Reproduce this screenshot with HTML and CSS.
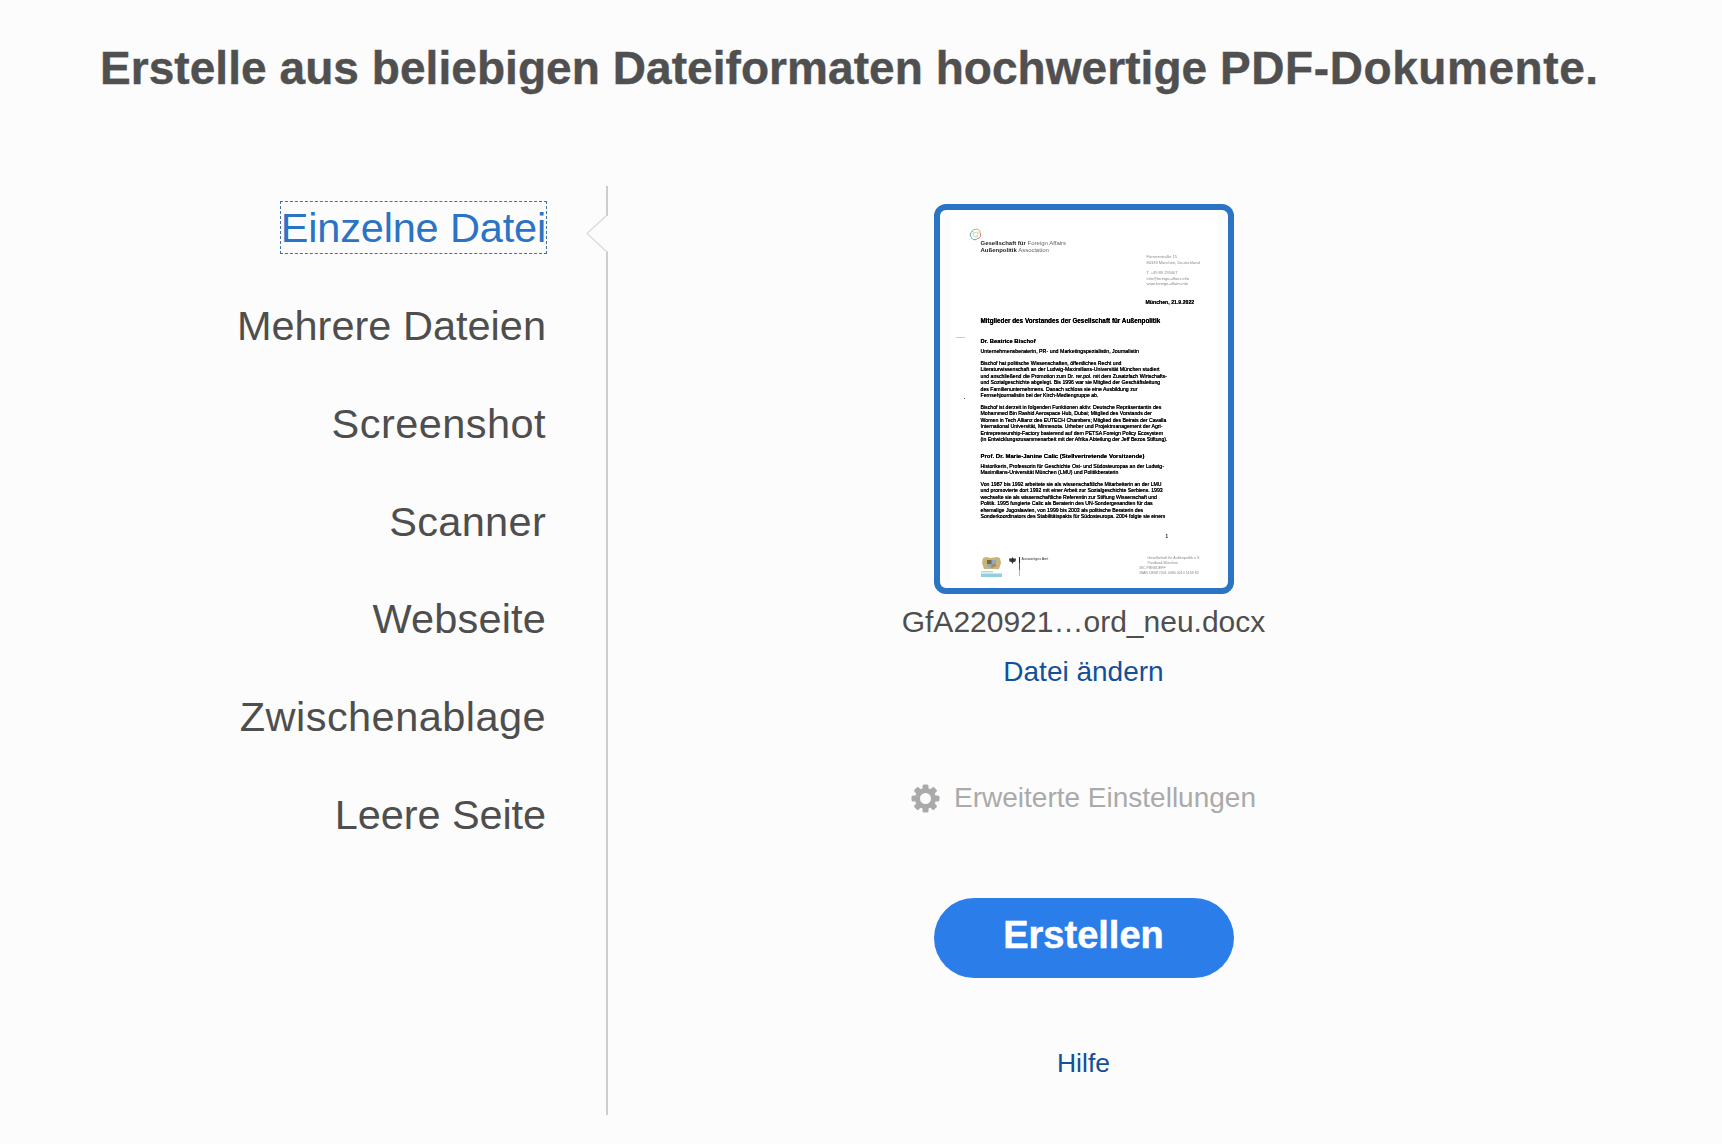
FILE: index.html
```html
<!DOCTYPE html>
<html lang="de">
<head>
<meta charset="utf-8">
<title>PDF erstellen</title>
<link rel="stylesheet" href="styles.css">
</head>
<body>
<div class="app">
  <h1 class="title">Erstelle aus beliebigen Dateiformaten hochwertige <span class="title-end">PDF-Dokumente.</span></h1>
  <div class="main">
    <nav class="side">
      <ul class="menu">
        <li class="item active fit-a"><span>Einzelne Datei</span></li>
        <li class="item"><span>Mehrere Dateien</span></li>
        <li class="item fit-b"><span>Screenshot</span></li>
        <li class="item fit-c"><span>Scanner</span></li>
        <li class="item fit-d"><span>Webseite</span></li>
        <li class="item fit-b"><span>Zwischenablage</span></li>
        <li class="item fit-e"><span>Leere Seite</span></li>
      </ul>
      <svg class="notch" width="22" height="46" viewBox="0 0 22 46"><path d="M21 3 L1 21.500 L21 40" fill="#fcfcfc" stroke="#dcdcdc" stroke-width="1.500"/><rect x="20" y="4" width="3" height="35" fill="#fcfcfc"/></svg>
    </nav>
    <section class="content">
      <div class="thumb">
        <div class="page">
          <i class="mark mark-a"></i><i class="mark mark-b"></i>
          <div class="head">
            <svg class="logo" width="13" height="13" viewBox="0 0 13 13" fill="none" stroke-width="1"><path d="M6.500 1.500 C9 .5 11.500 2.500 11 5" stroke="#e0a43a"/><path d="M11 5 C12.500 7.500 11 10.500 8.500 10.500" stroke="#d9685f"/><path d="M8.500 10.500 C6.500 12.500 3.500 12 2.500 9.500" stroke="#4aa3b5"/><path d="M2.500 9.500 C.5 7.500 1 4 3.500 3.500" stroke="#4aa3b5"/><path d="M3.500 3.500 C3.500 2 5 1 6.500 1.500" stroke="#7fb069"/><path d="M4 5 L9 4 L8 9 L4.500 8 Z" stroke="#b9c99a" stroke-width=".7"/></svg>
            <div class="org"><b>Gesellschaft für</b> Foreign Affairs<br><b>Außenpolitik</b> Association</div>
          </div>
          <div class="addr">Fürstenstraße 15<br>80333 München, Deutschland<div class="gap3"></div>T. +49 89 295407<br>info@foreign-affairs.info<br>www.foreign-affairs.info</div>
          <div class="date">München, 21.9.2022</div>
          <div class="h1">Mitglieder des Vorstandes der Gesellschaft für Außenpolitik</div>
          <div class="h2">Dr. Beatrice Bischof</div>
          <p class="para tight">Unternehmensberaterin, PR- und Marketingspezialistin, Journalistin</p>
          <p class="para">Bischof hat politische Wissenschaften, öffentliches Recht und<br>Literaturwissenschaft an der Ludwig-Maximilians-Universität München studiert<br>und anschließend die Promotion zum Dr. rer.pol. mit dem Zusatzfach Wirtschafts-<br>und Sozialgeschichte abgelegt. Bis 1996 war sie Mitglied der Geschäftsleitung<br>des Familienunternehmens. Danach schloss sie eine Ausbildung zur<br>Fernsehjournalistin bei der Kirch-Mediengruppe ab.</p>
          <p class="para">Bischof ist derzeit in folgenden Funktionen aktiv: Deutsche Repräsentantin des<br>Mohammed Bin Rashid Aerospace Hub, Dubai; Mitglied des Vorstands der<br>Women in Tech Allianz des EUTECH Chambers; Mitglied des Beirats der Cavalla<br>International Universität, Minnesota. Urheber und Projektmanagement der Agri-<br>Entrepreneurship-Factory basierend auf dem PETSA Foreign Policy Ecosystem<br>(in Entwicklungszusammenarbeit mit der Afrika Abteilung der Jeff Bezos Stiftung).</p>
          <div class="h2 h2b">Prof. Dr. Marie-Janine Calic (Stellvertretende Vorsitzende)</div>
          <p class="para">Historikerin, Professorin für Geschichte Ost- und Südosteuropas an der Ludwig-<br>Maximilians-Universität München (LMU) und Politikberaterin</p>
          <p class="para">Von 1987 bis 1992 arbeitete sie als wissenschaftliche Mitarbeiterin an der LMU<br>und promovierte dort 1992 mit einer Arbeit zur Sozialgeschichte Serbiens. 1993<br>wechselte sie als wissenschaftliche Referentin zur Stiftung Wissenschaft und<br>Politik. 1995 fungierte Calic als Beraterin des UN-Sondergesandten für das<br>ehemalige Jugoslawien, von 1999 bis 2003 als politische Beraterin des<br>Sonderkoordinators des Stabilitätspakts für Südosteuropa. 2004 folgte sie einem</p>
          <div class="pageno">1</div>
          <div class="foot">
            <svg class="crest" width="21" height="20" viewBox="0 0 21 20"><path d="M2 1 L5 0 L10 1 L16 0 L19 1 L20 6 L18 12 L3 12 L1 6 Z" fill="#c9b37a"/><path d="M6 3 H15 V9 L10.500 11 L6 9 Z" fill="#8aa9c8"/><path d="M6 3 H10.500 V7 H6 Z" fill="#7b6a3e"/><path d="M10.500 7 H15 V9 L10.500 11 Z" fill="#a98a5a"/><rect x="0" y="14" width="12" height="1.500" fill="#a9dbe0"/><rect x="0" y="16.500" width="21" height="3.500" fill="#8fd0dc"/></svg>
            <svg class="eagle" width="7" height="7" viewBox="0 0 7 7"><path d="M3.500 0 L4.500 1.500 L7 1.500 L6.500 4.500 L4.500 5 L3.500 7 L2.500 5 L.5 4.500 L0 1.500 L2.500 1.500 Z" fill="#333"/></svg>
            <div class="flag"></div>
            <div class="amt">Auswärtiges Amt</div>
            <div class="bank">Gesellschaft für Außenpolitik e.V.<br>Postbank München<br><span class="out">BIC PBNKDEFF</span><br><span class="out">IBAN DE68 7001 0080 0010 5169 82</span></div>
          </div>
        </div>
      </div>
      <div class="filename">GfA220921…ord_neu.docx</div>
      <a class="link change">Datei ändern</a>
      <div class="advanced">
        <svg class="gear" width="29" height="29" viewBox="0 0 29 29">
          <g fill="#aaaaaa">
            <rect x="11.500" y="0.500" width="6" height="28" rx="1.500"/>
            <rect x="11.500" y="0.500" width="6" height="28" rx="1.500" transform="rotate(45 14.500 14.500)"/>
            <rect x="11.500" y="0.500" width="6" height="28" rx="1.500" transform="rotate(90 14.500 14.500)"/>
            <rect x="11.500" y="0.500" width="6" height="28" rx="1.500" transform="rotate(135 14.500 14.500)"/>
            <circle cx="14.500" cy="14.500" r="10.500"/>
          </g>
          <circle cx="14.500" cy="14.500" r="5.500" fill="#fcfcfc"/>
        </svg>
        <span>Erweiterte Einstellungen</span>
      </div>
      <button class="create">Erstellen</button>
      <a class="link help">Hilfe</a>
    </section>
  </div>
</div>
</body>
</html>
```
FILE: styles.css
```css
* { box-sizing: border-box; }
html, body { margin: 0; padding: 0; background: #fcfcfc; }
body { font-family: "Liberation Sans", Arial, sans-serif; color: #4e4e4e; }
.app { width: 1722px; height: 1144px; overflow: hidden; }
.title { margin: 0; padding: 40px 0 0 100px; font-size: 46px; line-height: 56px; font-weight: 700; letter-spacing: .06px; color: #505050; -webkit-text-stroke: .4px #505050; white-space: nowrap; height: 186px; }
.title-end { letter-spacing: .57px; }
.main { display: flex; height: 929px; }
.side { position: relative; width: 608px; border-right: 2px solid #cdcdcd; flex: none; padding: 16px 60px 0 0; }
.menu { list-style: none; margin: 0; padding: 0; display: flex; flex-direction: column; align-items: flex-end; gap: 45.850px; }
.item { font-size: 41.500px; line-height: 52px; height: 52px; white-space: nowrap; }
.item span { display: block; }
.fit-a { letter-spacing: -.16px; }
.fit-b { letter-spacing: .45px; }
.fit-c { letter-spacing: .3px; }
.fit-d { letter-spacing: .15px; }
.fit-e { letter-spacing: -.1px; }
.active { color: #2b74c4; }
.active span { height: 51px; outline: 1px dashed #3a76a0; }
.notch { position: absolute; right: -2px; top: 26px; }
.content { flex: none; width: 951px; display: flex; flex-direction: column; align-items: center; padding: 18px 0 0 0; }
.thumb { width: 300px; height: 390px; border: 6px solid #2b74c4; border-radius: 12px; background: #fcfcfc; display: flex; justify-content: center; overflow: hidden; flex: none; }
.page { position: relative; width: 266px; height: 100%; background: #fff; padding: 18px 0 0 30px; color: #111; font-size: 5.200px; line-height: 6.500px; filter: blur(.25px); }
.mark { position: absolute; display: block; background: #ccc; }
.mark-a { left: 5px; top: 127px; width: 9px; height: 1px; }
.mark-b { left: 13px; top: 188px; width: 1px; height: 1px; background: #555; }
.head { position: relative; height: 26px; }
.logo { position: absolute; left: -12px; top: 0; }
.org { position: absolute; left: 0; top: 11.500px; color: #666; font-size: 6px; line-height: 7.500px; white-space: nowrap; }
.org b { color: #222; }
.addr { margin-left: 166px; color: #888; font-size: 4px; line-height: 5.500px; white-space: nowrap; height: 44.500px; }
.gap3 { height: 5px; }
.date { margin-left: 165px; font-weight: 700; font-size: 5.200px; white-space: nowrap; height: 18.750px; text-shadow: 0 0 .4px #000; }
.h1 { font-weight: 700; font-size: 6.350px; line-height: 7px; white-space: nowrap; height: 21px; color: #000; text-shadow: 0 0 .5px #000; }
.h2 { font-weight: 700; font-size: 5.800px; line-height: 7px; white-space: nowrap; height: 9.250px; color: #000; text-shadow: 0 0 .5px #000; }
.h2b { margin-top: 10.750px; font-size: 6px; }
.para { margin: 0 0 5px; white-space: nowrap; color: #000; text-shadow: 0 0 .5px #000; -webkit-text-stroke: .1px #000; }
.tight { margin-bottom: 5.500px; font-size: 5.300px; }
.pageno { margin: 14px 0 0 185px; font-weight: 700; font-size: 4.500px; height: 23.250px; }
.foot { position: relative; height: 22px; }
.crest { position: absolute; left: 0; top: 0; }
.eagle { position: absolute; left: 28px; top: 0; }
.flag { position: absolute; left: 38px; top: 0; width: 1px; height: 19px; background: linear-gradient(#222 33%, #c33 33% 66%, #e4b93a 66%); }
.amt { position: absolute; left: 41px; top: -1px; font-size: 3.600px; white-space: nowrap; color: #333; }
.bank { position: absolute; left: 167px; top: -1px; color: #888; font-size: 3.600px; line-height: 5px; white-space: nowrap; }
.out { margin-left: -8px; }
.filename { margin-top: 10px; font-size: 30px; line-height: 36px; white-space: nowrap; }
.link { color: #12509a; font-size: 28px; line-height: 34px; white-space: nowrap; }
.change { margin-top: 15px; }
.advanced { margin-top: 92px; display: flex; align-items: center; gap: 14px; color: #aaaaaa; font-size: 28px; line-height: 34px; white-space: nowrap; }
.gear { flex: none; }
.create { margin-top: 83px; width: 300px; height: 80px; border: 0; border-radius: 40px; background: #2b7eea; color: #fff; font: 700 38px/1 "Liberation Sans", Arial, sans-serif; -webkit-text-stroke: .5px #fff; flex: none; padding: 0 0 7px; }
.help { margin-top: 68px; font-size: 26.500px; }
```
